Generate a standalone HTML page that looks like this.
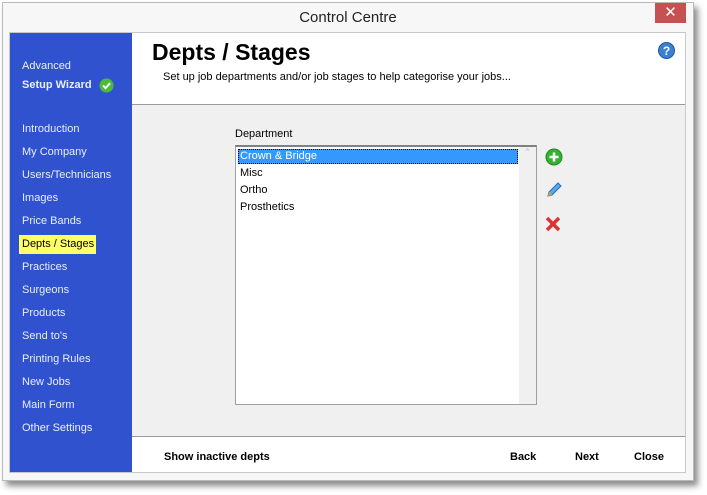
<!DOCTYPE html>
<html><head><style>
*{margin:0;padding:0;box-sizing:border-box}
body{width:707px;height:495px;background:#fff;font-family:"Liberation Sans",sans-serif;position:relative;overflow:hidden}
.win{position:absolute;left:2px;top:2px;width:692px;height:479px;background:#f7f7f7;border:1px solid #b9b9b9;box-shadow:4px 5px 6px rgba(0,0,0,.45)}
.title{position:absolute;left:0;top:0;width:100%;height:30px;text-align:center;font-size:15px;line-height:30px;color:#222}
.x{position:absolute;left:652px;top:0px;width:31px;height:20px;background:#c75050;color:#fff;text-align:center;font-size:15px;line-height:20px}
.frame{position:absolute;left:6px;top:29px;width:677px;height:441px;border:1px solid #c8c8c8;background:#f0f0f0}
.side{position:absolute;left:0;top:0;width:122px;height:439px;background:#3152cf;color:#e8eeff;font-size:11px}
.side div{position:absolute;left:12px}
.hdr{position:absolute;left:122px;top:0;right:0;height:72px;background:#fff;border-bottom:1px solid #9a9a9a}
.ftr{position:absolute;left:122px;top:403px;right:0;height:36px;background:#fff;border-top:1px solid #9a9a9a;font-size:11px;font-weight:bold}
.ftr span{position:absolute;top:14px}
.list{position:absolute;left:225px;top:112px;width:302px;height:260px;background:#fff;border:1px solid #a0a0a0;border-top:2px solid #808080;font-size:11px}
.list div{position:absolute;left:4px}
</style></head><body>
<div class="win">
<div class="title">Control Centre</div>
<div class="x">✕</div>
<div class="frame">
 <div class="side">
  <div style="top:27px;font-size:11px">Advanced</div>
  <div style="top:46px;font-weight:bold">Setup Wizard</div>
  <svg style="position:absolute;left:89px;top:45px" width="15" height="15"><circle cx="7.5" cy="7.5" r="7" fill="#4cbb3a"/><path d="M4 7.5l2.5 2.7 4.5-5" stroke="#fff" stroke-width="2" fill="none"/></svg>
  <div style="top:90px">Introduction</div>
  <div style="top:113px">My Company</div>
  <div style="top:136px">Users/Technicians</div>
  <div style="top:159px">Images</div>
  <div style="top:182px">Price Bands</div>
  <div style="top:202px;left:9px;width:77px;height:19px;background:#ffff66;color:#000;padding:3px 0 0 3px">Depts / Stages</div>
  <div style="top:228px">Practices</div>
  <div style="top:251px">Surgeons</div>
  <div style="top:274px">Products</div>
  <div style="top:297px">Send to's</div>
  <div style="top:320px">Printing Rules</div>
  <div style="top:343px">New Jobs</div>
  <div style="top:366px">Main Form</div>
  <div style="top:389px">Other Settings</div>
 </div>
 <div class="hdr">
  <div style="position:absolute;left:20px;top:6px;font-size:23px;font-weight:bold">Depts / Stages</div>
  <div style="position:absolute;left:31px;top:38px;font-size:11px">Set up job departments and/or job stages to help categorise your jobs...</div>
  <svg style="position:absolute;left:526px;top:9px" width="17" height="17"><circle cx="8.5" cy="8.5" r="8" fill="#3a7fd0" stroke="#235a9e"/><text x="8.5" y="13" font-size="12" font-weight="bold" text-anchor="middle" fill="#fff" font-family="Liberation Sans">?</text></svg>
 </div>
 <div style="position:absolute;left:225px;top:95px;font-size:11px">Department</div>
 <div class="list">
  <div style="top:2px;left:2px;width:280px;height:15px;background:#3399ff;color:#fff;border:1px dotted #000;padding:0 0 0 1px;line-height:13px">Crown &amp; Bridge</div>
  <div style="top:20px">Misc</div>
  <div style="top:37px">Ortho</div>
  <div style="top:54px">Prosthetics</div>
  <div style="left:283px;top:0;width:17px;height:257px;background:#f0f0f0;color:#bbb;font-size:9px;text-align:center">⌃</div>
 </div>
 <svg style="position:absolute;left:535px;top:115px" width="18" height="18"><circle cx="9" cy="9" r="8" fill="#35b22e" stroke="#1f8a1c"/><path d="M9 4.5v9M4.5 9h9" stroke="#fff" stroke-width="2.5"/></svg>
 <svg style="position:absolute;left:535px;top:148px" width="18" height="18"><path d="M3 15l1-4 9-9 3 3-9 9z" fill="#5aa8e8" stroke="#2a6eb0"/><path d="M3 15l1-4 3 3z" fill="#e0a040"/></svg>
 <svg style="position:absolute;left:535px;top:183px" width="16" height="16"><path d="M2 2l12 12M14 2L2 14" stroke="#d33" stroke-width="3.5"/></svg>
 <div class="ftr">
  <span style="left:32px">Show inactive depts</span>
  <span style="left:378px">Back</span>
  <span style="left:443px">Next</span>
  <span style="left:502px">Close</span>
 </div>
</div>
</div>
</body></html>
